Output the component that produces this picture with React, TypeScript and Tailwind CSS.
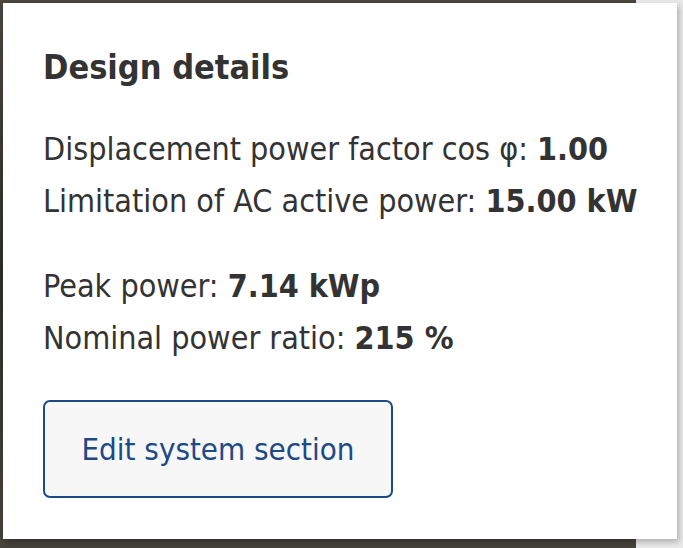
export default function App() {
    return (
        <div className="relative w-[683px] h-[548px] overflow-hidden flex bg-[#3b3933]" style={{ fontFamily: '"DejaVu Sans Condensed", "DejaVu Sans", sans-serif' }}>
            {/* backdrop */}
            <div className="w-[636px] h-full bg-gradient-to-b from-[#4a463e] via-[#2f2d29] to-[#46433b]" />
            <div className="flex-1 h-full bg-[#e9e9e9]" />

            {/* popover card */}
            <div className="absolute left-[3px] top-[3px] w-[674px] h-[536px] bg-white shadow-[2px_3px_6px_rgba(0,0,0,0.25)] px-[40px] pt-[42px] text-[#333333]">
                <h2 className="text-[34px] leading-[44px] font-bold">Design details</h2>

                <div className="mt-[34px] text-[32px] leading-[52px] whitespace-nowrap">
                    <p>Displacement power factor cos φ: <b>1.00</b></p>
                    <p>Limitation of AC active power: <b>15.00 kW</b></p>
                </div>

                <div className="mt-[33px] text-[32px] leading-[52px] whitespace-nowrap">
                    <p>Peak power: <b>7.14 kWp</b></p>
                    <p>Nominal power ratio: <b>215 %</b></p>
                </div>

                <button className="mt-[36px] w-[350px] h-[98px] rounded-[7px] border-2 border-[#1d4a86] bg-[#f7f7f7] text-[#1d4a86] text-[31px] whitespace-nowrap">
                    Edit system section
                </button>
            </div>
        </div>
    )
}
